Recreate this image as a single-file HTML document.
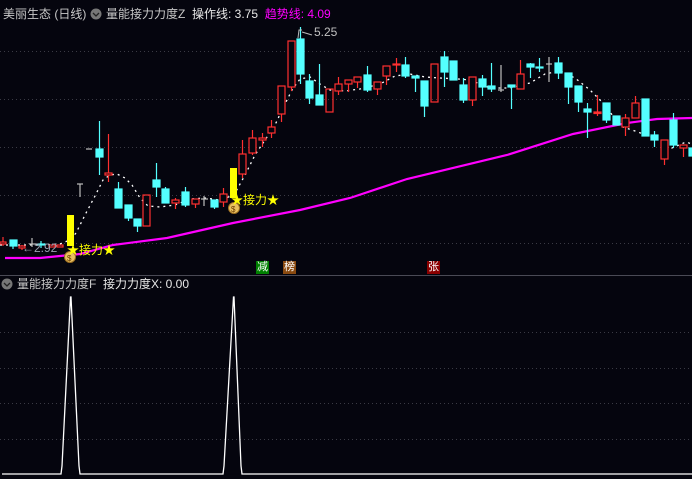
<!DOCTYPE html>
<html><head><meta charset="utf-8"><style>
html,body{margin:0;padding:0;background:#05050e;}
body{width:692px;height:479px;overflow:hidden;position:relative;font-family:"Liberation Sans","Noto Sans CJK SC",sans-serif;}
.t{position:absolute;font-size:12px;white-space:nowrap;line-height:14px;}
</style></head><body>
<svg width="692" height="479" style="position:absolute;left:0;top:0" xmlns="http://www.w3.org/2000/svg">
<g stroke="#3a3a44" stroke-dasharray="1,3" stroke-width="1">
<line x1="0" y1="51.5" x2="692" y2="51.5"/><line x1="0" y1="99.5" x2="692" y2="99.5"/>
<line x1="0" y1="147.5" x2="692" y2="147.5"/><line x1="0" y1="195.5" x2="692" y2="195.5"/>
<line x1="0" y1="243.5" x2="692" y2="243.5"/>
<line x1="0" y1="332.5" x2="692" y2="332.5"/><line x1="0" y1="368.5" x2="692" y2="368.5"/>
<line x1="0" y1="403.5" x2="692" y2="403.5"/><line x1="0" y1="439.5" x2="692" y2="439.5"/>
</g>
<line x1="0" y1="275.5" x2="692" y2="275.5" stroke="#4a4a55"/>
<polyline fill="none" stroke="#ff00ff" stroke-width="2.2" points="5,258 40,258 60,256 80,254 113,245 167,238 233,223 300,210 350,198 407,179 507,155 573,134 627,123 657,119 692,118"/>
<polyline fill="none" stroke="#ffffff" stroke-width="1.3" stroke-dasharray="2,4" points="0,245 40,245 60,244 70,240 76,233 85,215 95,196 103,180 110,175 117,174 125,178 132,185 140,198 148,206 160,207 175,205 190,199 205,198 220,200 234,195 245,175 255,155 265,140 275,125 282,110 292,90 300,79 310,77 320,84 330,90 345,91 360,89 380,84 395,76 410,74 425,77 440,78 458,79 470,80 490,88 510,88 530,83 545,74 560,71 575,78 590,90 600,100 610,112 620,126 635,131 660,140 672,148 686,142 692,144"/>
<rect x="67" y="215" width="7" height="31" fill="#ffff00"/>
<rect x="230" y="168" width="7" height="30" fill="#ffff00"/>
<g stroke="#ff3030" stroke-width="1.2" fill="none">
<line x1="3" y1="237" x2="3" y2="246"/><rect x="0" y="242" width="6" height="2" fill="#05050e"/>
<line x1="22" y1="245" x2="22" y2="250"/><rect x="19" y="246" width="6" height="2" fill="#05050e"/>
<rect x="49" y="245" width="6" height="2"/><rect x="57" y="245" width="6" height="2"/>
<line x1="108.5" y1="134" x2="108.5" y2="182"/><rect x="105" y="173" width="7" height="2" fill="#05050e"/>
<rect x="143" y="195" width="7" height="31"/>
<line x1="175.5" y1="198" x2="175.5" y2="209"/><rect x="172" y="200" width="7" height="3" fill="#05050e"/>
<line x1="195.5" y1="199" x2="195.5" y2="208"/><rect x="192" y="199" width="7" height="5" fill="#05050e"/>
<line x1="223.5" y1="188" x2="223.5" y2="207"/><rect x="220" y="194" width="7" height="8" fill="#05050e"/>
<line x1="242.5" y1="140" x2="242.5" y2="178"/><rect x="239" y="154" width="7" height="20" fill="#05050e"/>
<line x1="252.5" y1="130" x2="252.5" y2="155"/><rect x="249" y="138" width="7" height="15" fill="#05050e"/>
<line x1="262.5" y1="133" x2="262.5" y2="147"/><rect x="259" y="138" width="7" height="2" fill="#05050e"/>
<line x1="271.5" y1="120" x2="271.5" y2="138"/><rect x="268" y="127" width="7" height="6" fill="#05050e"/>
<line x1="281.5" y1="86" x2="281.5" y2="122"/><rect x="278" y="86" width="7" height="28" fill="#05050e"/>
<line x1="291.5" y1="41" x2="291.5" y2="91"/><rect x="288" y="41" width="7" height="46" fill="#05050e"/>
<rect x="326" y="89" width="7" height="23"/>
<line x1="338.5" y1="77" x2="338.5" y2="95"/><rect x="335" y="84" width="7" height="7" fill="#05050e"/>
<line x1="348.5" y1="80" x2="348.5" y2="92"/><rect x="345" y="80" width="7" height="4" fill="#05050e"/>
<line x1="357.5" y1="77" x2="357.5" y2="88"/><rect x="354" y="77" width="7" height="5" fill="#05050e"/>
<line x1="377.5" y1="82" x2="377.5" y2="95"/><rect x="374" y="82" width="7" height="7" fill="#05050e"/>
<line x1="386.5" y1="66" x2="386.5" y2="85"/><rect x="383" y="66" width="7" height="10" fill="#05050e"/>
<line x1="396.5" y1="58" x2="396.5" y2="72"/><rect x="393" y="64" width="7" height="1" fill="#05050e"/>
<rect x="431" y="64" width="7" height="38"/>
<line x1="472.5" y1="77" x2="472.5" y2="106"/><rect x="469" y="77" width="7" height="23" fill="#05050e"/>
<line x1="520.5" y1="60" x2="520.5" y2="89"/><rect x="517" y="74" width="7" height="15" fill="#05050e"/>
<line x1="597.5" y1="95" x2="597.5" y2="116"/><rect x="594" y="112" width="7" height="1.5" fill="#ff3030"/>
<line x1="625.5" y1="114" x2="625.5" y2="136"/><rect x="622" y="118" width="7" height="9" fill="#05050e"/>
<line x1="635.5" y1="96" x2="635.5" y2="118"/><rect x="632" y="103" width="7" height="15" fill="#05050e"/>
<line x1="664.5" y1="140" x2="664.5" y2="165"/><rect x="661" y="140" width="7" height="19" fill="#05050e"/>
<line x1="683.5" y1="145" x2="683.5" y2="157"/><rect x="680" y="145" width="7" height="3" fill="#05050e"/>
</g>
<g stroke="#54ffff" stroke-width="1.2" fill="#54ffff">
<line x1="13" y1="240" x2="13" y2="249"/><rect x="10" y="240" width="7" height="6"/>
<line x1="41" y1="241" x2="41" y2="248"/><rect x="38" y="244" width="7" height="1"/>
<line x1="99.5" y1="121" x2="99.5" y2="175"/><rect x="96" y="149" width="7" height="8"/>
<line x1="118.5" y1="182" x2="118.5" y2="208"/><rect x="115" y="189" width="7" height="19"/>
<line x1="128.5" y1="205" x2="128.5" y2="221"/><rect x="125" y="205" width="7" height="13"/>
<line x1="137.5" y1="219" x2="137.5" y2="232"/><rect x="134" y="219" width="7" height="7"/>
<line x1="156.5" y1="163" x2="156.5" y2="197"/><rect x="153" y="180" width="7" height="7"/>
<line x1="165.5" y1="187" x2="165.5" y2="203"/><rect x="162" y="189" width="7" height="14"/>
<line x1="185.5" y1="187" x2="185.5" y2="207"/><rect x="182" y="192" width="7" height="13"/>
<line x1="214.5" y1="200" x2="214.5" y2="209"/><rect x="211" y="200" width="7" height="7"/>
<line x1="300.5" y1="27" x2="300.5" y2="84"/><rect x="297" y="39" width="7" height="35"/>
<line x1="309.5" y1="74" x2="309.5" y2="104"/><rect x="306" y="81" width="7" height="17"/>
<line x1="319.5" y1="64" x2="319.5" y2="105"/><rect x="316" y="95" width="7" height="10"/>
<line x1="367.5" y1="66" x2="367.5" y2="92"/><rect x="364" y="75" width="7" height="15"/>
<line x1="405.5" y1="57" x2="405.5" y2="78"/><rect x="402" y="65" width="7" height="11"/>
<line x1="415.5" y1="76" x2="415.5" y2="92"/><rect x="412" y="76" width="7" height="2"/>
<line x1="424.5" y1="81" x2="424.5" y2="117"/><rect x="421" y="81" width="7" height="25"/>
<line x1="444.5" y1="51" x2="444.5" y2="87"/><rect x="441" y="57" width="7" height="15"/>
<rect x="450" y="61" width="7" height="19"/>
<line x1="463.5" y1="78" x2="463.5" y2="103"/><rect x="460" y="85" width="7" height="15"/>
<line x1="482.5" y1="75" x2="482.5" y2="96"/><rect x="479" y="79" width="7" height="8"/>
<line x1="491.5" y1="63" x2="491.5" y2="92"/><rect x="488" y="86" width="7" height="3"/>
<line x1="511.5" y1="85" x2="511.5" y2="109"/><rect x="508" y="85" width="7" height="2"/>
<line x1="530.5" y1="63" x2="530.5" y2="78"/><rect x="527" y="64" width="7" height="3"/>
<line x1="539.5" y1="58" x2="539.5" y2="72"/><rect x="536" y="67" width="7" height="1"/>
<line x1="558.5" y1="57" x2="558.5" y2="79"/><rect x="555" y="63" width="7" height="10"/>
<line x1="568.5" y1="73" x2="568.5" y2="104"/><rect x="565" y="73" width="7" height="14"/>
<line x1="578.5" y1="86" x2="578.5" y2="112"/><rect x="575" y="86" width="7" height="16"/>
<line x1="587.5" y1="103" x2="587.5" y2="138"/><rect x="584" y="109" width="7" height="3"/>
<line x1="606.5" y1="103" x2="606.5" y2="123"/><rect x="603" y="103" width="7" height="17"/>
<rect x="613" y="116" width="7" height="9"/>
<rect x="642" y="99" width="7" height="37"/>
<line x1="654.5" y1="131" x2="654.5" y2="147"/><rect x="651" y="135" width="7" height="5"/>
<line x1="673.5" y1="113" x2="673.5" y2="148"/><rect x="670" y="120" width="7" height="25"/>
<rect x="689" y="148" width="4" height="8"/>
</g>
<g stroke="#bdbdbd" stroke-width="1.2">
<line x1="32" y1="238" x2="32" y2="247"/><line x1="29" y1="244" x2="36" y2="244"/>
<line x1="80" y1="184" x2="80" y2="197"/><line x1="77" y1="184" x2="83" y2="184"/>
<line x1="86" y1="149" x2="92" y2="149"/>
<line x1="204" y1="196" x2="204" y2="206"/><line x1="201" y1="199" x2="208" y2="199"/>
<line x1="501" y1="65" x2="501" y2="92"/><line x1="498" y1="90" x2="504" y2="90"/>
<line x1="549" y1="57" x2="549" y2="82"/><line x1="546" y1="64" x2="552" y2="64"/>
</g>
<g>
<circle cx="70" cy="257" r="5.5" fill="#e8c060" stroke="#a07020"/>
<text x="67" y="261" font-size="8" fill="#6a3a00" font-family="Liberation Sans">$</text>
<circle cx="234" cy="208" r="5.5" fill="#e8c060" stroke="#a07020"/>
<text x="231" y="212" font-size="8" fill="#6a3a00" font-family="Liberation Sans">$</text>
</g>
<polyline fill="none" stroke="#ffffff" stroke-width="1.3" points="2,474 61,474 62,466 70.5,297 71,297 79,466 80,474 223,474 224,466 233.5,297 234,297 241,466 242,474 692,474"/>
<circle cx="96" cy="14" r="5.5" fill="#777"/><polyline points="93,13 96,16 99,13" fill="none" stroke="#222" stroke-width="1.3"/>
<circle cx="7" cy="284" r="5.5" fill="#777"/><polyline points="4,283 7,286 10,283" fill="none" stroke="#222" stroke-width="1.3"/>
<polyline points="298,38 299,30 302,30" fill="none" stroke="#bbb"/>
<line x1="302" y1="32" x2="312" y2="35" stroke="#bbb"/>
</svg>
<div class="t" style="left:3px;top:7px;color:#c8c8c8">美丽生态 (日线)</div>
<div class="t" style="left:106px;top:7px;color:#c8c8c8">量能接力力度Z&nbsp; <span style="color:#e8e8e8">操作线: 3.75</span>&nbsp; <span style="color:#ff00ff">趋势线: 4.09</span></div>
<div class="t" style="left:314px;top:25px;color:#c0c0c0">5.25</div>
<div class="t" style="left:22px;top:241px;color:#9aa0b0">←2.92</div>
<div class="t" style="left:67px;top:243px;color:#ffff00">★接力★</div>
<div class="t" style="left:231px;top:193px;color:#ffff00">★接力★</div>
<div class="t" style="left:256px;top:261px;width:13px;height:13px;background:#008000;color:#fff;font-size:11px;line-height:13px;text-align:center">减</div>
<div class="t" style="left:283px;top:261px;width:13px;height:13px;background:#8a4a10;color:#fff;font-size:11px;line-height:13px;text-align:center">榜</div>
<div class="t" style="left:427px;top:261px;width:13px;height:13px;background:#8a0000;color:#fff;font-size:11px;line-height:13px;text-align:center">张</div>
<div class="t" style="left:17px;top:277px;color:#c8c8c8">量能接力力度F&nbsp; <span style="color:#e8e8e8">接力力度X: 0.00</span></div>
</body></html>
